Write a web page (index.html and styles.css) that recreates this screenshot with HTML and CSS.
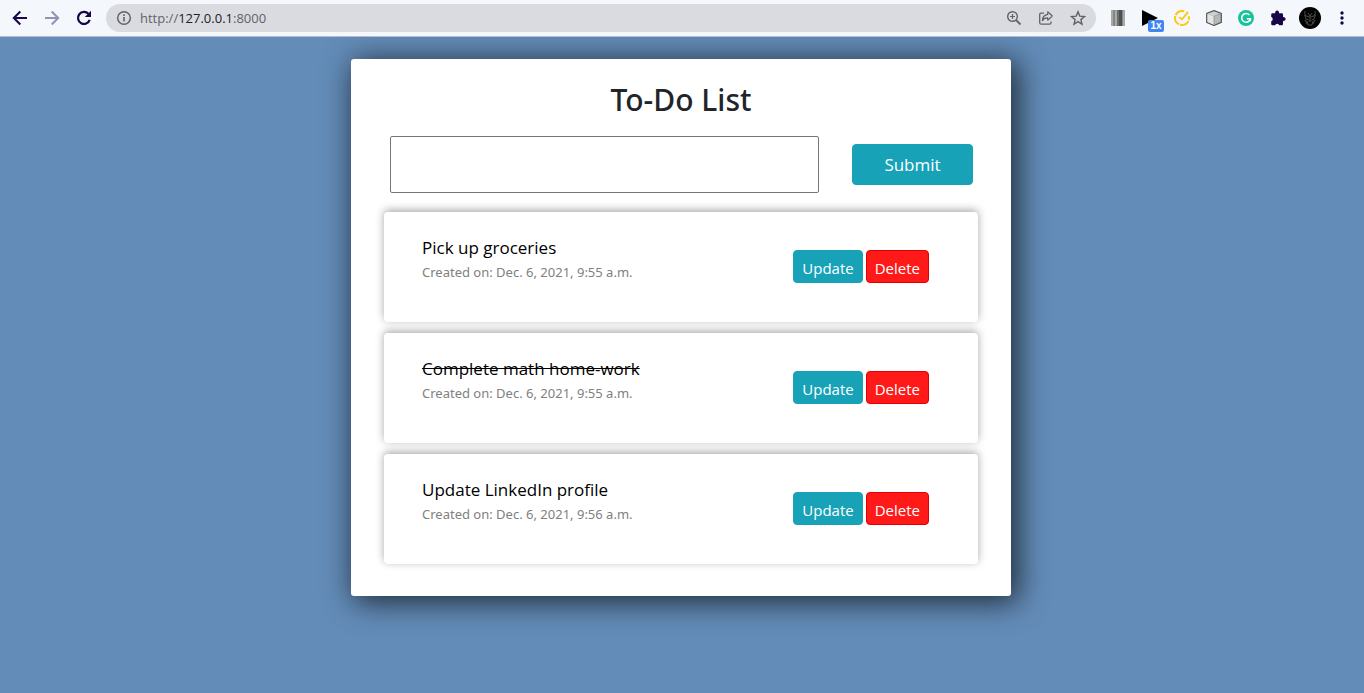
FILE: index.html
```html
<!DOCTYPE html>
<html lang="en">
<head>
<meta charset="utf-8">
<meta name="viewport" content="width=device-width, initial-scale=1">
<title>To-Do List</title>
<link rel="stylesheet" href="styles.css">
</head>
<body>
<header class="toolbar">
  <nav class="nav" aria-label="Navigation">
    <button class="icon-button" type="button" aria-label="Back"><svg width="16" height="16" viewBox="0 0 16 16"><path d="M15 8H2M8.3 1.5 1.8 8l6.5 6.5" fill="none" stroke="#170548" stroke-width="2"/></svg></button>
    <button class="icon-button" type="button" aria-label="Forward"><svg width="16" height="16" viewBox="0 0 16 16"><path d="M1 8h13M7.7 1.5 14.2 8l-6.5 6.5" fill="none" stroke="#9590b4" stroke-width="2"/></svg></button>
    <button class="icon-button" type="button" aria-label="Reload"><svg width="16" height="16" viewBox="0 0 16 16"><path d="M13.7 9.8A6 6 0 1 1 12.4 3.8" fill="none" stroke="#170548" stroke-width="2.2"/><path d="M15 .7V7H8.8z" fill="#170548"/></svg></button>
  </nav>
  <div class="address">
    <button class="icon-button" type="button" aria-label="Site information"><svg width="16" height="16" viewBox="0 0 16 16"><circle cx="8" cy="8" r="6.3" fill="none" stroke="#5f6368" stroke-width="1.5"/><path d="M8 7v4.5M8 4.3V6" stroke="#5f6368" stroke-width="1.6"/></svg></button>
    <p class="url">http://<span class="host">127.0.0.1</span>:8000</p>
    <div class="actions">
      <button class="icon-button" type="button" aria-label="Zoom"><svg width="16" height="16" viewBox="0 0 16 16"><circle cx="6.5" cy="6.5" r="4.8" fill="none" stroke="#5f6368" stroke-width="1.4"/><path d="m10 10 4.5 4.5" stroke="#5f6368" stroke-width="1.8"/><path d="M6.5 4v5M4 6.5h5" stroke="#5f6368" stroke-width="1.2"/></svg></button>
      <button class="icon-button" type="button" aria-label="Share"><svg width="16" height="16" viewBox="0 0 16 16"><path d="M6 3.2H3.2Q1.7 3.2 1.7 4.7v8Q1.7 14.2 3.2 14.2h8.3q1.5 0 1.5-1.5v-1.2" fill="none" stroke="#5f6368" stroke-width="1.3"/><path d="M9.7 1.8 14.3 6l-4.6 4.2V7.8Q6 7.6 4.3 10.6 4.8 5.2 9.7 4.4z" fill="none" stroke="#5f6368" stroke-width="1.2" stroke-linejoin="round"/></svg></button>
      <button class="icon-button" type="button" aria-label="Bookmark"><svg width="16" height="16" viewBox="0 0 16 16"><path d="m8 1.7 1.8 4.4 4.7.4-3.6 3.1 1.1 4.6L8 11.7l-4 2.5 1.1-4.6L1.5 6.5l4.7-.4z" fill="none" stroke="#5f6368" stroke-width="1.4"/></svg></button>
    </div>
  </div>
  <div class="extensions">
    <button class="icon-button" type="button" aria-label="Color bars"><svg width="16" height="16" viewBox="0 0 16 16"><path d="M1 0h14v16H1z" fill="#858585"/><path d="M1 0h2v16H1zM5 0h2v16H5z" fill="#a9a9a9"/><path d="M7 0h2v16H7z" fill="#6d6d6d"/><path d="M9 0h3v16H9z" fill="#4f4f4f"/><path d="M13 0h2v16h-2z" fill="#aaa"/></svg></button>
    <button class="icon-button speed" type="button" aria-label="Playback speed"><svg width="16" height="16" viewBox="0 0 16 16"><path d="m0 0 16 8-16 8z" fill="#000"/></svg><span class="badge">1x</span></button>
    <button class="icon-button" type="button" aria-label="Timer"><svg width="16" height="16" viewBox="0 0 16 16"><path d="M10.2 1.3A7 7 0 1 0 14.8 6.2" fill="none" stroke="#fdc912" stroke-width="2" stroke-dasharray="10 1"/><path d="M13.2 1.2 14.8 2.8 9 9.6Q8 10.6 6.9 9.7L4.5 7.5l1-1.1L8 7.9z" fill="#fdc912"/></svg></button>
    <button class="icon-button" type="button" aria-label="Cube"><svg width="16" height="16" viewBox="0 0 16 16"><path d="m8 .6 7.3 2.8v9L8 15.5.7 12.4v-9z" fill="#b8b8b8" stroke="#555" stroke-width="1.2"/><path d="m1.5 3.9 6.5 2.6v8.2l-6.5-2.8z" fill="#e4e4e4"/><path d="m8 1.4 6.2 2.4L8 6.2 1.8 3.8z" fill="#d0d0d0"/><path d="M8 6.3V15M8 6.3l6.5-2.6" stroke="#888" stroke-width=".7"/></svg></button>
    <button class="icon-button" type="button" aria-label="Writing assistant"><svg width="16" height="16" viewBox="0 0 16 16"><circle cx="8" cy="8" r="8" fill="#15c39a"/><path d="M11.4 5A4.4 4.4 0 1 0 12.4 8.7H8.8M12.4 8.7v2.5" fill="none" stroke="#fff" stroke-width="1.5"/></svg></button>
    <button class="icon-button" type="button" aria-label="Extensions"><svg width="16" height="16" viewBox="0 0 16 16"><path d="M1.2 4.5q0-1.3 1.3-1.3H5.2a2 2 0 1 1 3.8 0h2.8q1.2 0 1.2 1.3v2.6a2 2 0 1 1 0 3.8v3q0 1.3-1.2 1.3H9.3a2.2 2.2 0 0 0-4.2 0H2.5q-1.3 0-1.3-1.3v-2.6a2.2 2.2 0 0 0 0-4.2z" fill="#170548"/></svg></button>
    <button class="icon-button" type="button" aria-label="Profile"><svg width="22" height="22" viewBox="0 0 22 22"><circle cx="11" cy="11" r="11" fill="#020202"/><path d="M6 4q-1 3 1 5l4 1 4-1q2-2 1-5M5.5 8l2 5 2-1M16.5 8l-2 5-2-1M8 14l1 4h4l1-4M6 13l2 4M16 13l-2 4M9 6l2 3 2-3M9.5 14h3M11 10v4" fill="none" stroke="#555" stroke-width=".9"/></svg></button>
    <button class="icon-button" type="button" aria-label="Menu"><svg width="16" height="16" viewBox="0 0 16 16"><g fill="#170548"><circle cx="8" cy="3" r="1.7"/><circle cx="8" cy="8" r="1.7"/><circle cx="8" cy="13" r="1.7"/></g></svg></button>
  </div>
</header>
<main class="page">
  <section class="card">
    <h1 class="title">To-Do List</h1>
    <form class="entry">
      <input class="entry-input" type="text" aria-label="New task">
      <button class="button submit" type="submit">Submit</button>
    </form>
    <ul class="tasks">
      <li class="task">
        <div class="details">
          <h2 class="name">Pick up groceries</h2>
          <p class="created">Created on: Dec. 6, 2021, 9:55 a.m.</p>
        </div>
        <div class="controls"><a class="button small" href="#update-1">Update</a><a class="button small danger" href="#delete-1">Delete</a></div>
      </li>
      <li class="task">
        <div class="details">
          <h2 class="name"><s>Complete math home-work</s></h2>
          <p class="created">Created on: Dec. 6, 2021, 9:55 a.m.</p>
        </div>
        <div class="controls"><a class="button small" href="#update-2">Update</a><a class="button small danger" href="#delete-2">Delete</a></div>
      </li>
      <li class="task">
        <div class="details">
          <h2 class="name">Update LinkedIn profile</h2>
          <p class="created">Created on: Dec. 6, 2021, 9:56 a.m.</p>
        </div>
        <div class="controls"><a class="button small" href="#update-3">Update</a><a class="button small danger" href="#delete-3">Delete</a></div>
      </li>
    </ul>
  </section>
</main>
</body>
</html>
```
FILE: styles.css
```css
* { box-sizing: border-box; }

body {
  display: flex;
  flex-direction: column;
  min-height: 100vh;
  margin: 0;
  background: #638cb8;
  color: #212529;
  font-family: "Segoe UI", "Open Sans", "Noto Sans", sans-serif;
}

h1, h2, p, ul { margin: 0; padding: 0; }

.toolbar {
  position: relative;
  z-index: 1;
  display: flex;
  align-items: center;
  gap: 10px;
  height: 37px;
  padding: 0 14px 0 12px;
  border-bottom: 1px solid #b6bdd2;
  background: #f4f8fd;
}

.icon-button {
  display: flex;
  padding: 0;
  border: 0;
  background: none;
}

.nav, .actions, .extensions {
  display: flex;
  align-items: center;
  gap: 16px;
}

.nav { padding-right: 4px; }

.address {
  display: flex;
  flex: 1;
  align-items: center;
  gap: 8px;
  height: 28px;
  padding: 0 10px;
  border-radius: 14px;
  background: #d9dbe0;
}

.url {
  flex: 1;
  color: #5f6368;
  font-size: 13px;
  line-height: 20px;
}

.host { color: #202124; }

.actions .icon-button, .extensions .icon-button { flex: none; }

.extensions { padding-left: 4px; }

.extensions .icon-button:nth-child(7) { margin: 0 -3px; }

.speed { position: relative; }

.badge {
  position: absolute;
  top: 10px;
  left: 6px;
  width: 16px;
  border-radius: 2px;
  background: #4285f4;
  color: #fff;
  font-family: "Liberation Sans", Arial, sans-serif;
  font-size: 10px;
  font-weight: 700;
  line-height: 12px;
  text-align: center;
}

.page {
  display: flex;
  flex: 1;
  align-items: flex-start;
  justify-content: center;
  padding: 22px 24px 22px 22px;
}

.card {
  width: 100%;
  max-width: 660px;
  padding: 22px 33px 32px;
  border-radius: 3px;
  background: #fff;
  box-shadow: 5px 4px 30px 2px rgba(0, 0, 0, .7);
}

.title {
  font-family: "Segoe UI", "Noto Sans", sans-serif;
  font-size: 30px;
  font-weight: 500;
  line-height: 38px;
  text-align: center;
}

.entry {
  display: flex;
  align-items: center;
  gap: 33px;
  margin: 17px 5px 19px 6px;
}

.entry-input {
  flex: 1;
  min-width: 0;
  height: 57px;
  padding: 0 12px;
  border: 1px solid #767676;
  border-radius: 2px;
  font: inherit;
}

.button {
  border: 1px solid #17a2b8;
  border-radius: 4px;
  background: #17a2b8;
  color: #fff;
  font-family: inherit;
  text-decoration: none;
}

.submit {
  width: 121px;
  padding: 8px 0 7px;
  font-size: 17px;
  line-height: 24px;
}

.tasks {
  display: flex;
  flex-direction: column;
  gap: 11px;
  list-style: none;
}

.task {
  display: flex;
  align-items: flex-start;
  justify-content: space-between;
  min-height: 110px;
  padding: 24px 49px 24px 38px;
  border-radius: 4px;
  background: #fff;
  box-shadow: 0 -2px 9px rgba(0, 0, 0, .35);
}

.name {
  color: #000;
  font-size: 17px;
  font-weight: 400;
  line-height: 24px;
}

.created {
  color: #808080;
  font-family: "Segoe UI", "Noto Sans", sans-serif;
  font-size: 13px;
  line-height: 24px;
}

.controls {
  display: flex;
  gap: 3px;
  padding-top: 14px;
}

.small {
  padding: 6px 8px 3px;
  font-size: 15px;
  line-height: 22px;
}

.danger {
  border-color: #e00000;
  background: #ff1919;
}
```
